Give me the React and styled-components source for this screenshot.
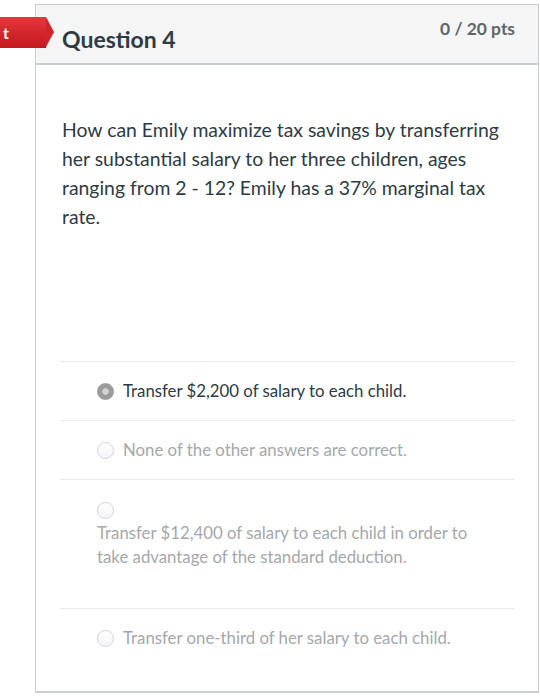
import React from 'react';
import styled, { createGlobalStyle } from 'styled-components';

const GlobalStyle = createGlobalStyle`
  body {
    margin: 0;
    background: #fff;
    font-family: Lato, "Open Sans", sans-serif;
  }
`;

const Page = styled.div`
  position: relative;
  padding: 4px 0 0 35px;
`;

const Tag = styled.div`
  position: absolute;
  left: 0;
  top: 17px;
  width: 46px;
  height: 31px;
  background: linear-gradient(#e2383e, #c4171e);
  color: #fff;
  font-size: 16px;
  font-weight: 700;
  line-height: 31px;
  text-align: right;
  overflow: visible;
  &::after {
    content: '';
    position: absolute;
    right: -8px;
    top: 0;
    border-top: 15.5px solid transparent;
    border-bottom: 15.5px solid transparent;
    border-left: 8px solid #d1252b;
  }
  span {
    display: inline-block;
    margin-right: 37px;
  }
`;

const Card = styled.div`
  width: 504px;
  height: 689px;
  box-sizing: border-box;
  border: 1px solid #c7cdd1;
  border-bottom: 2px solid #c7cdd1;
  display: flex;
  flex-direction: column;
`;

const Header = styled.div`
  height: 60px;
  box-sizing: border-box;
  background: #f5f5f5;
  border-bottom: 2px solid #c7cdd1;
  display: flex;
  justify-content: space-between;
  align-items: flex-start;
  padding: 0 23px 0 26px;
`;

const Title = styled.h2`
  margin: 20px 0 0;
  font-size: 23px;
  line-height: 28px;
  font-weight: 700;
  color: #2d3b45;
`;

const Points = styled.div`
  margin-top: 13px;
  font-size: 17.4px;
  line-height: 22px;
  font-weight: 700;
  color: #5f6468;
`;

const Body = styled.div`
  padding: 50px 23px 0 24px;
`;

const Prompt = styled.p`
  margin: 0 0 130px 2px;
  font-size: 19.4px;
  line-height: 29px;
  color: #2d3b45;
`;

const Answers = styled.div`
  border-top: 1px solid #e8eaec;
`;

const Answer = styled.div`
  display: flex;
  flex-direction: ${p => (p.$stacked ? 'column' : 'row')};
  align-items: ${p => (p.$stacked ? 'flex-start' : 'center')};
  gap: ${p => (p.$stacked ? '2px' : '9px')};
  padding: ${p => (p.$stacked ? '22px 24px 39px 37px' : '0 0 0 37px')};
  min-height: ${p => (p.$stacked ? 'auto' : '58px')};
  border-bottom: ${p => (p.$last ? 'none' : '1px solid #e8eaec')};
  font-size: 16.8px;
  line-height: 24px;
  color: ${p => (p.$selected ? '#2d3b45' : '#a4a8ab')};
`;

const Radio = styled.span`
  flex: none;
  width: 17px;
  height: 17px;
  border-radius: 50%;
  box-sizing: border-box;
  border: 1px solid ${p => (p.$checked ? '#9a9a9a' : '#d2d4d6')};
  background: ${p =>
    p.$checked
      ? 'radial-gradient(circle, #d2d2d2 0 3px, #9b9b9b 3.5px)'
      : 'linear-gradient(#fff, #f3f4f5)'};
`;

const answers = [
  { text: 'Transfer $2,200 of salary to each child.', selected: true },
  { text: 'None of the other answers are correct.' },
  {
    text: 'Transfer $12,400 of salary to each child in order to take advantage of the standard deduction.',
    stacked: true,
  },
  { text: 'Transfer one-third of her salary to each child.' },
];

const App = () => (
  <Page>
    <GlobalStyle />
    <Tag>
      <span>t</span>
    </Tag>
    <Card>
      <Header>
        <Title>Question 4</Title>
        <Points>0 / 20 pts</Points>
      </Header>
      <Body>
        <Prompt>
          How can Emily maximize tax savings by transferring her substantial
          salary to her three children, ages ranging from 2 - 12? Emily has a
          37% marginal tax rate.
        </Prompt>
        <Answers>
          {answers.map((a, i) => (
            <Answer
              key={i}
              $selected={a.selected}
              $stacked={a.stacked}
              $last={i === answers.length - 1}
            >
              <Radio $checked={a.selected} />
              <span>{a.text}</span>
            </Answer>
          ))}
        </Answers>
      </Body>
    </Card>
  </Page>
);

export default App;
